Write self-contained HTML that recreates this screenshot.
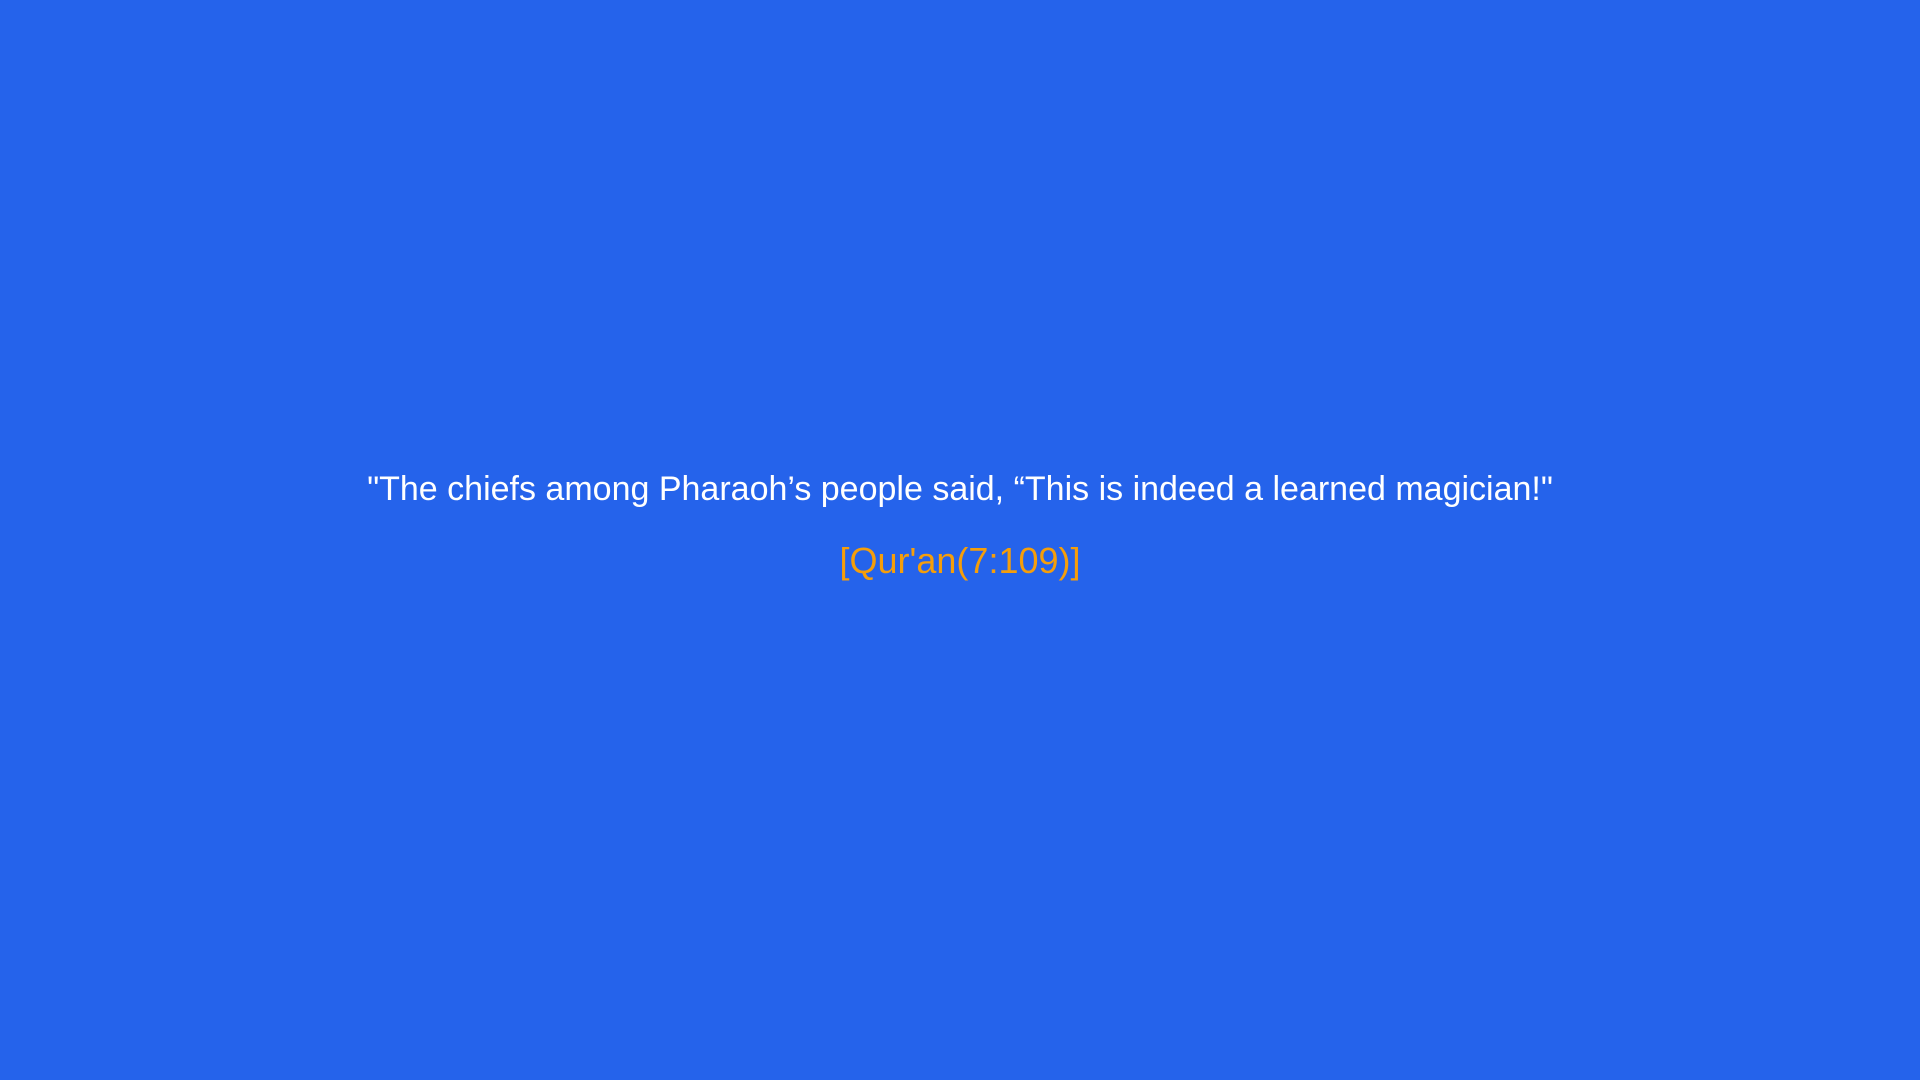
<!DOCTYPE html>
<html>
<head>
<meta charset="utf-8">
<style>
  html, body {
    margin: 0;
    padding: 0;
    width: 1920px;
    height: 1080px;
    background: #2563eb;
    overflow: hidden;
  }
  .q {
    position: absolute;
    left: 0;
    width: 1920px;
    text-align: center;
    font-family: "Liberation Sans", sans-serif;
  }
  .t {
    top: 467px;
    font-size: 34px;
    color: #ffffff;
    line-height: 44px;
  }
  .r {
    top: 538px;
    font-size: 36px;
    color: #f59e0b;
    line-height: 46px;
  }
</style>
</head>
<body>
  <div class="q t">"The chiefs among Pharaoh’s people said, “This is indeed a learned magician!"</div>
  <div class="q r">[Qur'an(7:109)]</div>
</body>
</html>
